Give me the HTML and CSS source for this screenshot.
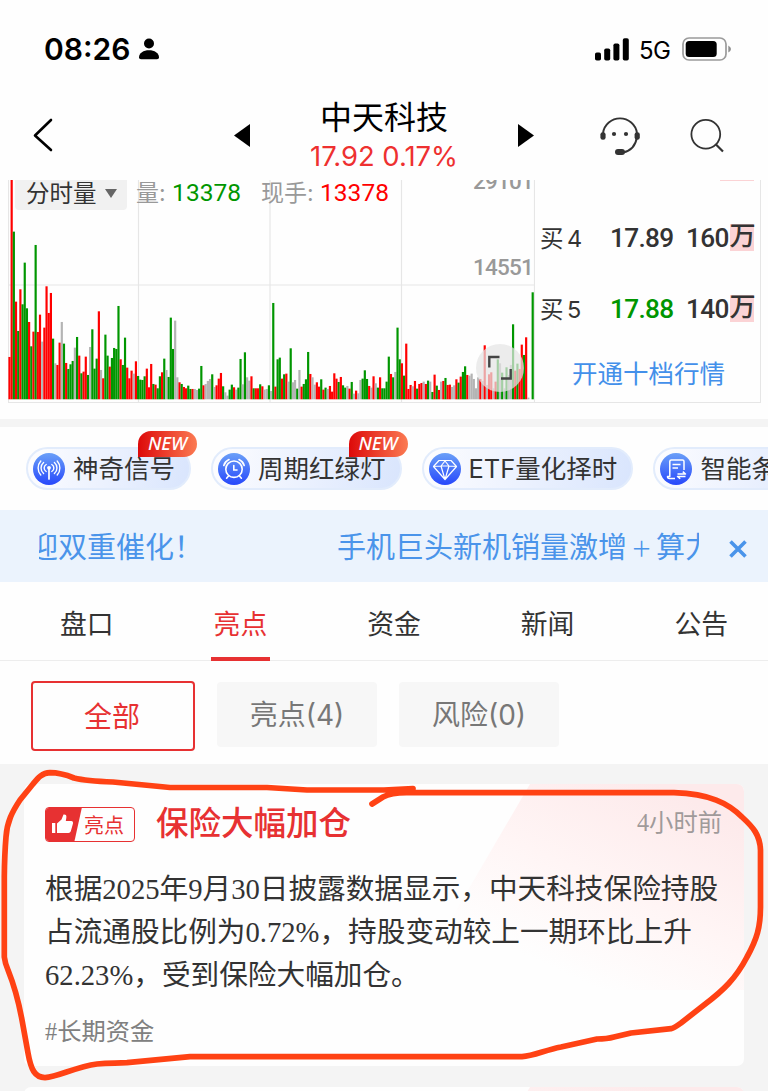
FILE: index.html
```html
<!DOCTYPE html>
<html lang="zh-CN">
<head>
    <meta charset="UTF-8">
    <meta name="viewport" content="width=device-width, initial-scale=1.0">
    <title>中天科技</title>
    <link rel="stylesheet" href="styles.css">
</head>
<body>
<div class="status-bar">
    <span class="clock">08:26</span>
    <svg class="person" width="20" height="22" viewBox="0 0 20 22"><circle cx="10" cy="5.5" r="5"/><path d="M0 19.5C0 15 4.5 12.3 10 12.3S20 15 20 19.5Q20 21.3 18 21.3H2Q0 21.3 0 19.5Z"/></svg>
    <svg class="signal" width="34" height="23" viewBox="0 0 34 23"><rect x="0" y="14.5" width="6" height="8" rx="1.8"/><rect x="9.2" y="10.5" width="6" height="12" rx="1.8"/><rect x="18.4" y="5.5" width="6" height="17" rx="1.8"/><rect x="27.8" y="0.3" width="6" height="22.2" rx="1.8"/></svg>
    <span class="network">5G</span>
    <svg class="battery" width="50" height="24" viewBox="0 0 50 24"><rect x="1" y="1" width="43" height="22" rx="6" fill="none" stroke="#9b9b9b" stroke-width="1.7"/><rect x="3.7" y="4" width="31" height="16" rx="3.5"/><path d="M46.3 8.5Q49 10 49 12T46.3 15.5Z" fill="#8f8f8f"/></svg>
</div>

<header>
    <svg class="back" width="22" height="36" viewBox="0 0 22 36"><path d="M19 3L3 18.5L19 33" fill="none" stroke="#000" stroke-width="2.6" stroke-linecap="round" stroke-linejoin="round"/></svg>
    <svg class="prev" width="16" height="24" viewBox="0 0 16 24"><path d="M16 0V23L0 11.5Z"/></svg>
    <div class="stock">
        <h1>中天科技</h1>
        <p>17.92 0.17%</p>
    </div>
    <svg class="next" width="16" height="24" viewBox="0 0 16 24"><path d="M0 0V23L16 11.5Z"/></svg>
    <svg class="service" width="40" height="40" viewBox="0 0 40 40"><path d="M3 17A17.2 17.2 0 0 1 37 17M37 21Q35 34 23 36.5" fill="none" stroke="#333" stroke-width="1.9"/><rect x="0.4" y="16.2" width="5.2" height="7.6" rx="2.4"/><rect x="34.6" y="16.2" width="5.2" height="7.6" rx="2.4"/><rect x="15" y="33" width="10" height="6" rx="3"/><circle cx="14" cy="18" r="2.1"/><circle cx="26" cy="18" r="2.1"/></svg>
    <svg class="search" width="34" height="36" viewBox="0 0 34 36"><path d="M25.5 27L33 34.5" stroke="#333" stroke-width="2.2"/><circle cx="15.8" cy="17.2" r="14.4" fill="none" stroke="#333" stroke-width="1.8"/></svg>
</header>

<section class="quote">
    <div class="chart">
        <svg class="volume" id="volume" width="527" height="223" viewBox="0 0 527 223">
            <path d="M0.5 0V222M130.5 0V222M262 0V222M393.5 0V222M526.5 0V222M0 105H527" stroke="#e6e6e6" fill="none" stroke-width="1.2"/>
        </svg>
        <div class="legend">
            <button>分时量<i></i></button>
            <span>量: <b class="green">13378</b></span>
            <span>现手: <b class="red">13378</b></span>
        </div>
        <span class="scale scale-max">29101</span>
        <span class="scale scale-mid">14551</span>
        <div class="expand">
            <svg width="24" height="26" viewBox="0 0 24 26"><path d="M1.3 12.5V2H11.5M22.7 14V23.5H13" fill="none" stroke="#444" stroke-width="2.4"/></svg>
        </div>
    </div>
    <div class="orders">
        <div class="order"><span>买 4</span><b>17.89</b><b class="lot">160<em>万</em></b></div>
        <div class="order"><span>买 5</span><b class="green">17.88</b><b class="lot">140<em>万</em></b></div>
        <a href="#">开通十档行情</a>
    </div>
</section>

<section class="chips">
    <a class="chip">
        <svg width="32" height="32" viewBox="0 0 32 32"><circle cx="16" cy="16" r="16" fill="url(#blue)"/><g fill="none" stroke="#fff" stroke-width="1.4" stroke-linecap="round"><path d="M16 15V26" stroke-width="1.7"/><path d="M13.2 18.5A4 4 0 0 1 13.2 11.5M18.8 18.5A4 4 0 0 0 18.8 11.5M10.6 20.5A7.2 7.2 0 0 1 10.6 9.5M21.4 20.5A7.2 7.2 0 0 0 21.4 9.5M7.8 22A10.5 10.5 0 0 1 7.8 8M24.2 22A10.5 10.5 0 0 0 24.2 8"/></g><circle cx="16" cy="14.8" r="1.9" fill="#fff"/></svg>
        <span>神奇信号</span>
        <em class="badge">NEW</em>
    </a>
    <a class="chip">
        <svg width="32" height="32" viewBox="0 0 32 32"><circle cx="16" cy="16" r="16" fill="url(#blue)"/><g fill="none" stroke="#fff" stroke-width="1.6" stroke-linecap="round"><circle cx="16" cy="16.2" r="8.2"/><path d="M15.8 12.5V17H19M10.5 23L8.6 25.2M21.5 23L23.4 25.2M5.8 12.5Q7 8.4 11 6.6M26.2 12.5Q25 8.4 21 6.6"/></g></svg>
        <span>周期红绿灯</span>
        <em class="badge">NEW</em>
    </a>
    <a class="chip">
        <svg width="32" height="32" viewBox="0 0 32 32"><circle cx="16" cy="16" r="16" fill="url(#blue)"/><path d="M10 7.5H22L27.5 13.5L16 26.5L4.5 13.5ZM4.5 13.5L12 13L16 8L20 13L27.5 13.5M12 13H20L16 26.5Z" fill="none" stroke="#fff" stroke-width="1.2" stroke-linejoin="round"/></svg>
        <span>ETF量化择时</span>
    </a>
    <a class="chip">
        <svg width="32" height="32" viewBox="0 0 32 32"><circle cx="16" cy="16" r="16" fill="url(#blue)"/><path d="M15 25.5H9.5Q7.5 25.5 7.5 23.5H9.8V8.5Q9.8 7 11.3 7H22.5Q24 7 24 8.5V17M12.5 11.5H20.5M12.5 15H18M17.5 21H25.5L22.8 18.6M25.5 23.4H17.5L20.2 25.8" fill="none" stroke="#fff" stroke-width="1.5" stroke-linejoin="round"/></svg>
        <span>智能条件单</span>
    </a>
</section>

<section class="notice">
    <div class="marquee">
        <span>迎双重催化！</span>
        <span>手机巨头新机销量激增<i>＋</i>算力</span>
    </div>
    <svg width="18" height="18" viewBox="0 0 18 18"><path d="M1.5 1.5L16.5 16.5M16.5 1.5L1.5 16.5" stroke="#4a94ea" stroke-width="3.6"/></svg>
</section>

<nav>
    <a href="#">盘口</a>
    <a href="#" class="active">亮点</a>
    <a href="#">资金</a>
    <a href="#">新闻</a>
    <a href="#">公告</a>
</nav>

<div class="filters">
    <button class="selected">全部</button>
    <button>亮点(4)</button>
    <button>风险(0)</button>
</div>

<main>
    <article class="card">
        <div class="card-head">
            <span class="tag">
                <svg width="36" height="34" viewBox="0 0 36 34"><path d="M0 0H36L28.5 34H0Z" fill="#e73132"/><path d="M6 16H9.3V26H6ZM11 16.5L15.5 12.5L17.5 7.6Q21 7.2 20.3 11L19.8 14H25.5Q27.6 14.3 27 16.6L24.8 24.3Q24.2 26 22.5 26H11Z" fill="#fff"/></svg>
                <b>亮点</b>
            </span>
            <h2>保险大幅加仓</h2>
            <time>4小时前</time>
        </div>
        <p>根据2025年9月30日披露数据显示，中天科技保险持股占流通股比例为0.72%，持股变动较上一期环比上升62.23%，受到保险大幅加仓。</p>
        <a class="topic" href="#">#长期资金</a>
    </article>
    <article class="card"></article>
</main>

<svg class="scribble" width="768" height="331" viewBox="0 760 768 331">
    <path d="M413 788.5L384 790H307L267 787.5H170L113 782Q86 781 74 778C64 774 58 772.7 50 772.7C42 773 38 778 33 784L20 800C12 812 7 822 6 837Q4.5 855 4.3 877V957Q5 963 8 970C14 985 18 998 22 1020L28 1053C31 1070 35 1077.6 45 1077.6C58 1077 75 1067 97 1064C110 1062.5 115 1063.5 127 1062.7L190 1056.6H522C534 1056 545 1050 561 1047L597 1039Q607 1039 614 1037L631 1033L671 1028.7Q674 1028 681 1023L704 1005C724 990 736 978 747 957C757 939 760.5 927 760.5 907V850C760 835 753 827 742 817C728 803 710 794 674 792.7H411Q392 792 383 797L372 804"/>
</svg>

<svg width="0" height="0" class="defs">
    <defs>
        <linearGradient id="blue" x1="0" y1="0" x2="0" y2="1"><stop offset="0" stop-color="#6a9ff8"/><stop offset="1" stop-color="#2748fb"/></linearGradient>
    </defs>
</svg>

<script>
    // one bar per minute: r = up, g = down, x = flat, number = height in thirds of a pixel
    const volume = 'r127 r663 g503 r293 g205 r330 g285 g410 g273 r232 g159 r203 g463 r202 r254 x173 r215 r339 r259 r319 ' +
        'g182 x108 r103 r170 x232 g167 r109 g91 g105 g115 x155 g187 r131 g78 r83 r128 g73 x157 g210 g92 ' +
        'g122 r264 x88 r63 g194 g131 r98 g124 g154 g151 g280 r120 g103 g185 r95 r63 r86 x77 r114 g70 ' +
        'g59 g58 g69 r92 r36 r106 g46 r44 g33 g69 r81 g122 x88 g67 g245 g151 x236 x66 r51 g46 ' +
        'r37 r33 g41 g31 r31 x31 x28 g32 g100 r42 x46 x55 x61 g75 x37 r42 r62 r79 g39 x21 ' +
        'x11 g29 g44 r36 x29 g35 g121 x45 g141 x66 x56 r69 g33 r33 r33 g45 r39 x29 x31 g42 ' +
        'x25 g289 r38 g120 g125 r62 g75 r77 x53 g153 x51 x58 g32 x88 r38 g46 g60 g142 r76 x66 ' +
        'x44 r51 r38 g60 r29 g35 x31 r40 r23 r78 r62 g52 r67 g42 g35 x40 r32 g52 x17 r26 ' +
        'x18 x58 g62 g87 g61 r40 x35 r69 x48 g35 r66 g33 g33 g53 g128 r76 g66 x82 g215 g120 ' +
        'r108 g71 r167 r31 r43 x39 r55 g32 r46 r49 x53 r46 g56 x53 g22 r74 g41 r28 x53 r55 ' +
        'g64 r43 r44 x37 x42 r60 g50 r68 g82 g99 r73 x71 x77 x61 x33 x66 r61 x55 r162 x43 ' +
        'r75 r81 x33 r53 g120 x108 g80 x33 g96 x73 x103 g225 r86 g107 r91 r164 g133 r186 x5 x0 g321';
    const colors = { r: '#ff0000', g: '#009600', x: '#b4b4b4' };
    const chart = document.getElementById('volume');

    volume.split(' ').forEach((item, i) => {
        const height = Number(item.slice(1)) / 3;
        const bar = document.createElementNS('http://www.w3.org/2000/svg', 'rect');
        bar.setAttribute('x', (0.4 + i * 2.18).toFixed(2));
        bar.setAttribute('y', 219.3 - height);
        bar.setAttribute('width', 2.18);
        bar.setAttribute('height', height);
        bar.setAttribute('fill', colors[item[0]]);
        chart.appendChild(bar);
    });
</script>
</body>
</html>
```
FILE: styles.css
```css
* {
    box-sizing: border-box;
}

body {
    margin: 0;
    position: relative;
    width: 768px;
    height: 1091px;
    overflow: hidden;
    background: #fefefe;
    color: #333;
    font-family: Inter, "Noto Sans CJK SC", sans-serif;
}

h1, h2, p {
    margin: 0;
    font-weight: 400;
}

a {
    color: inherit;
    text-decoration: none;
}

button {
    border: none;
    padding: 0;
    font-family: inherit;
    color: inherit;
}

svg {
    display: block;
    flex: none;
}

.green {
    color: #009600;
}

.red {
    color: #ff0000;
}

/* status bar */
.status-bar {
    height: 98px;
    padding: 0 36px 0 44px;
    display: flex;
    align-items: center;
    color: #000;
}

.clock {
    font-size: 30px;
    font-weight: 600;
    width: 95px;
}

.signal {
    margin-left: auto;
}

.network {
    font-size: 24px;
    margin: 2px 11px 0 10px;
    width: 32px;
    letter-spacing: -0.5px;
}

/* header */
header {
    height: 82px;
    display: flex;
    align-items: flex-start;
    padding-left: 32px;
}

.back {
    margin-top: 19px;
}

.prev {
    margin: 26px 0 0 180px;
}

.stock {
    width: 172px;
    margin: 0 48px 0 48px;
    text-align: center;
}

.stock h1 {
    font-size: 32px;
    line-height: 40px;
    color: #000;
}

.stock p {
    font-size: 27.4px;
    line-height: 36px;
    color: #ee3030;
}

.next {
    margin-top: 26px;
}

.service {
    margin: 18px 0 0 66px;
    fill: #333;
}

.search {
    margin: 19px 0 0 50px;
}

/* volume chart and order book */
.quote {
    height: 223px;
    margin: 0 7px 0 8px;
    display: flex;
    border-bottom: 1px solid #e6e6e6;
}

.chart {
    position: relative;
    flex: none;
    width: 527px;
    overflow: hidden;
}

.legend {
    position: absolute;
    top: 0;
    left: 7px;
    display: flex;
    align-items: flex-start;
    font-size: 23px;
    line-height: 26px;
    color: #999;
}

.legend button {
    width: 112px;
    height: 30px;
    margin-right: 9px;
    padding: 0 0 3px 11px;
    display: flex;
    align-items: center;
    background: #f1f1f1;
    border-radius: 0 0 4px 4px;
    font-size: 23.5px;
    line-height: 26px;
    color: #333;
}

.legend i {
    margin-left: 8px;
    border: 6.5px solid transparent;
    border-top: 9px solid #666;
    border-bottom: 0;
}

.legend span {
    margin-right: 20px;
    white-space: nowrap;
}

.legend b {
    font-family: Roboto, sans-serif;
    font-weight: 400;
    font-size: 24.5px;
}

.scale {
    position: absolute;
    right: 2px;
    font-family: Roboto, sans-serif;
    font-size: 22.5px;
    font-weight: 500;
    line-height: 24px;
    letter-spacing: -0.8px;
    color: #999;
}

.scale-max {
    top: -11px;
}

.scale-mid {
    top: 75px;
}

.expand {
    position: absolute;
    left: 468px;
    top: 164px;
    width: 48px;
    height: 48px;
    display: flex;
    align-items: center;
    justify-content: center;
    border-radius: 50%;
    background: rgba(228, 228, 228, 0.72);
}

.orders {
    flex: 1;
    min-width: 0;
    padding-top: 22px;
    border-right: 1px solid #e6e6e6;
    background: linear-gradient(#fbd3d5, #fbd3d5) 185px 0 / 34px 1px no-repeat;
}

.order {
    height: 71px;
    display: flex;
    align-items: center;
    padding-left: 5px;
    font-size: 23px;
    white-space: nowrap;
}

.order span {
    width: 71px;
    margin-top: -2px;
    font-size: 23.5px;
    word-spacing: -3px;
}

.order b {
    width: 76px;
    font-family: Roboto, "Noto Sans CJK SC", sans-serif;
    font-size: 26.2px;
    line-height: 36px;
    font-weight: 500;
    letter-spacing: -0.7px;
}

.order .lot {
    display: flex;
    align-items: center;
    padding-left: 1px;
}

.lot em {
    height: 27px;
    line-height: 25px;
    width: 24px;
    margin-left: 1px;
    font-style: normal;
    background: #fbd3d5;
}

.orders a {
    display: block;
    margin-top: 12px;
    padding-left: 2px;
    text-align: center;
    font-size: 25.5px;
    line-height: 36px;
    color: #4390ea;
}

/* tool chips */
.chips {
    height: 91px;
    margin-top: 16px;
    padding: 20px 0 0 26px;
    display: flex;
    align-items: flex-start;
    gap: 20px;
    border-top: 8px solid #f4f4f4;
    overflow: hidden;
}

.chip {
    position: relative;
    flex: none;
    height: 43px;
    padding: 0 14px 0 5px;
    display: flex;
    align-items: center;
    border: 2px solid #e2ecfc;
    border-radius: 22px;
    background: linear-gradient(100deg, #fdfdff, #d9e5fd);
    font-size: 25.5px;
    line-height: 36px;
    white-space: nowrap;
}

.chip span {
    margin-left: 8px;
}

.badge {
    position: absolute;
    top: -18px;
    right: -8px;
    width: 59px;
    height: 26px;
    border-radius: 13px 13px 13px 0;
    background: linear-gradient(90deg, #dd0a0a, #fb7a52);
    color: #fff;
    font-family: "Noto Sans", sans-serif;
    font-size: 18.5px;
    font-weight: 500;
    line-height: 24px;
    text-align: center;
}

/* news ticker */
.notice {
    height: 72px;
    display: flex;
    align-items: center;
    padding: 3px 21px 0 39px;
    background: #ebf3fd;
    color: #4a94ea;
}

.marquee {
    width: 660px;
    margin-right: 30px;
    display: flex;
    gap: 134px;
    overflow: hidden;
    font-size: 29px;
    line-height: 42px;
    white-space: nowrap;
}

.marquee span:first-child {
    margin-left: -10px;
}

.marquee i {
    display: inline-block;
    width: 29px;
    font-size: 21px;
    font-style: normal;
    text-align: center;
    vertical-align: 2px;
    line-height: 30px;
}

.notice svg {
    margin-top: 3px;
}

/* tabs */
nav {
    height: 79px;
    display: flex;
    padding-left: 10px;
    border-bottom: 1px solid #ededed;
    font-size: 26.8px;
}

nav a {
    flex: none;
    width: 153.6px;
    height: 79px;
    display: flex;
    flex-direction: column;
    align-items: center;
    line-height: 85px;
}

nav a:last-child {
    width: 143.6px;
    padding-left: 10px;
    align-items: center;
}

nav .active {
    color: #e73132;
}

nav .active::after {
    content: "";
    flex: none;
    width: 59px;
    height: 4px;
    margin-top: -10px;
    background: #e73132;
}

/* filters */
.filters {
    height: 103px;
    display: flex;
    align-items: flex-start;
    gap: 22px;
    padding: 20px 0 0 31px;
}

.filters button {
    width: 160px;
    height: 65px;
    margin-top: 1px;
    padding-bottom: 3px;
    border-radius: 4px;
    background: #f7f7f7;
    font-size: 28px;
    color: #777;
}

.filters .selected {
    width: 164px;
    height: 70px;
    margin-top: 0;
    padding: 0 2px 3px 0;
    border: 2px solid #e73132;
    background: #fefefe;
    color: #e73132;
}

/* feed */
main {
    height: 327px;
    padding: 20px 24px 0;
    background: #f4f4f4;
    overflow: hidden;
}

.card {
    position: relative;
    z-index: 0;
    height: 282px;
    margin-bottom: 21px;
    padding: 21px 21px 0;
    border-radius: 7px;
    background: #fefefe;
    font-family: "Liberation Serif", "Noto Sans CJK SC", serif;
    overflow: hidden;
}

/* slanted pink sheen in the corner */
.card::before {
    content: "";
    position: absolute;
    z-index: -1;
    top: 0;
    right: 0;
    width: 290px;
    height: 206px;
    background: linear-gradient(205deg, #fdeaeb 12%, #fff5f5 48%, #fefefe 80%);
    clip-path: polygon(76px 0, 100% 0, 100% 100%, 0 100%, 0 130px);
}

.card-head {
    height: 38px;
    display: flex;
    align-items: center;
}

.tag {
    width: 90px;
    height: 35px;
    margin-right: 21px;
    display: flex;
    align-items: center;
    border: 1px solid #e73132;
    border-radius: 4px;
    overflow: hidden;
    color: #e73132;
}

.tag b {
    margin-left: 2px;
    font-size: 20px;
    font-weight: 400;
}

.card h2 {
    font-size: 32.5px;
    line-height: 38px;
    font-weight: 500;
    color: #e73132;
}

.card time {
    margin: -7px 1px 0 auto;
    font-size: 24.3px;
    color: #a09a9a;
}

.card p {
    margin: 25px -10px 0 0;
    font-size: 28.65px;
    line-height: 43px;
}

.topic {
    display: block;
    margin-top: 17px;
    font-size: 24.3px;
    line-height: 36px;
    color: #808080;
}

/* hand-drawn mark over the feed */
.scribble {
    position: absolute;
    left: 0;
    bottom: 0;
    fill: none;
    stroke: #ff4214;
    stroke-width: 5.7px;
    stroke-linecap: round;
    stroke-linejoin: round;
}

.defs {
    position: absolute;
}
```
